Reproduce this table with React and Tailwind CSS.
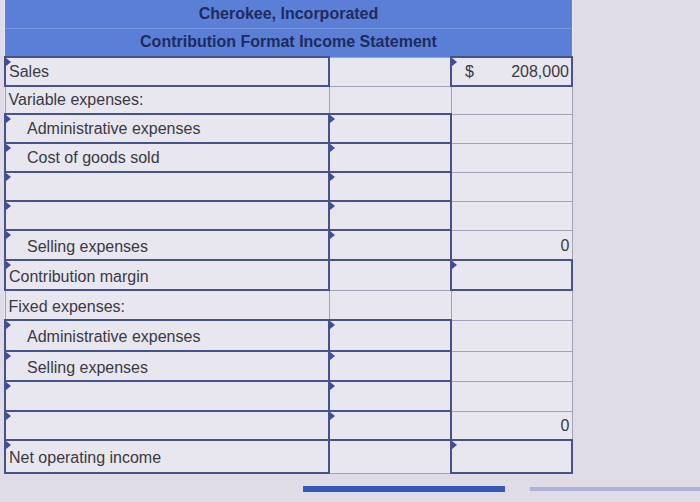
import React from 'react';

// rows of the statement: li = label is an input, mi = middle input, ri = right input
const rows = [
  { label: 'Sales', li: true, ri: true, dollar: true, value: '208,000', h: 'h-[29px]' },
  { label: 'Variable expenses:', h: 'h-[28px]' },
  { label: 'Administrative expenses', li: true, indent: true, mi: true, h: 'h-[29px]' },
  { label: 'Cost of goods sold', li: true, indent: true, mi: true, h: 'h-[29px]' },
  { label: '', li: true, mi: true, h: 'h-[29px]' },
  { label: '', li: true, mi: true, h: 'h-[29px]' },
  { label: 'Selling expenses', li: true, indent: true, mi: true, value: '0', h: 'h-[30px]', low: true },
  { label: 'Contribution margin', li: true, ri: true, h: 'h-[30px]', low: true },
  { label: 'Fixed expenses:', h: 'h-[30px]', low: true },
  { label: 'Administrative expenses', li: true, indent: true, mi: true, h: 'h-[31px]', low: true },
  { label: 'Selling expenses', li: true, indent: true, mi: true, h: 'h-[30px]', low: true },
  { label: '', li: true, mi: true, h: 'h-[30px]' },
  { label: '', li: true, mi: true, value: '0', h: 'h-[29px]', low: true },
  { label: 'Net operating income', li: true, ri: true, h: 'h-[33px]', low: true },
];

const Flag = () => (
  <span className="absolute top-0 left-0 w-0 h-0 border-y-[4px] border-y-transparent border-l-[5px] border-l-[#3c4d9c]" />
);

const Cell = ({ input, children, className = '' }) => (
  <td
    className={
      'relative p-0 align-middle ' +
      (input ? 'border-2 border-[#45528c] ' : 'border border-[#a3a1b4] ') +
      className
    }
  >
    {input && <Flag />}
    {children}
  </td>
);

const App = () => {
  return (
    <div
      className="w-[700px] h-[502px] bg-[#dfdce7] overflow-hidden relative text-[#3a3944]"
      style={{ fontFamily: '"Liberation Sans", Arial, sans-serif' }}
    >
      <table className="border-collapse ml-[4px] bg-[#e8e6ee] text-[16px]">
        <colgroup>
          <col className="w-[324px]" />
          <col className="w-[122px]" />
          <col className="w-[121px]" />
        </colgroup>
        <tbody>
          <tr className="h-[28px]">
            <td colSpan={3} className="p-0 bg-[#5b7fd6] border-b border-[#7a98e0] text-center font-bold text-[#1e2b60] text-[16px]">
              Cherokee, Incorporated
            </td>
          </tr>
          <tr className="h-[29px]">
            <td colSpan={3} className="p-0 bg-[#5b7fd6] text-center font-bold text-[#1e2b60] text-[16px]">
              Contribution Format Income Statement
            </td>
          </tr>
          {rows.map((r, i) => (
            <tr key={i} className={r.h}>
              <Cell
                input={r.li}
                className={(r.indent ? 'pl-[21px]' : 'pl-[3px]') + (r.low ? ' pt-[3px]' : '')}
              >
                {r.label}
              </Cell>
              <Cell input={r.mi} />
              <Cell input={r.ri} className={r.low ? 'pt-[2px]' : ''}>
                <div className="flex justify-between items-center pl-[13px] pr-[2px]">
                  <span>{r.dollar ? '$' : ''}</span>
                  <span>{r.value}</span>
                </div>
              </Cell>
            </tr>
          ))}
        </tbody>
      </table>
      <div className="flex items-center mt-[12px]">
        <div className="ml-[303px] w-[202px] h-[6px] bg-[#3658b8]" />
        <div className="ml-[25px] flex-1 h-[4px] bg-[#b0b1d8]" />
      </div>
    </div>
  );
};

export default App;
